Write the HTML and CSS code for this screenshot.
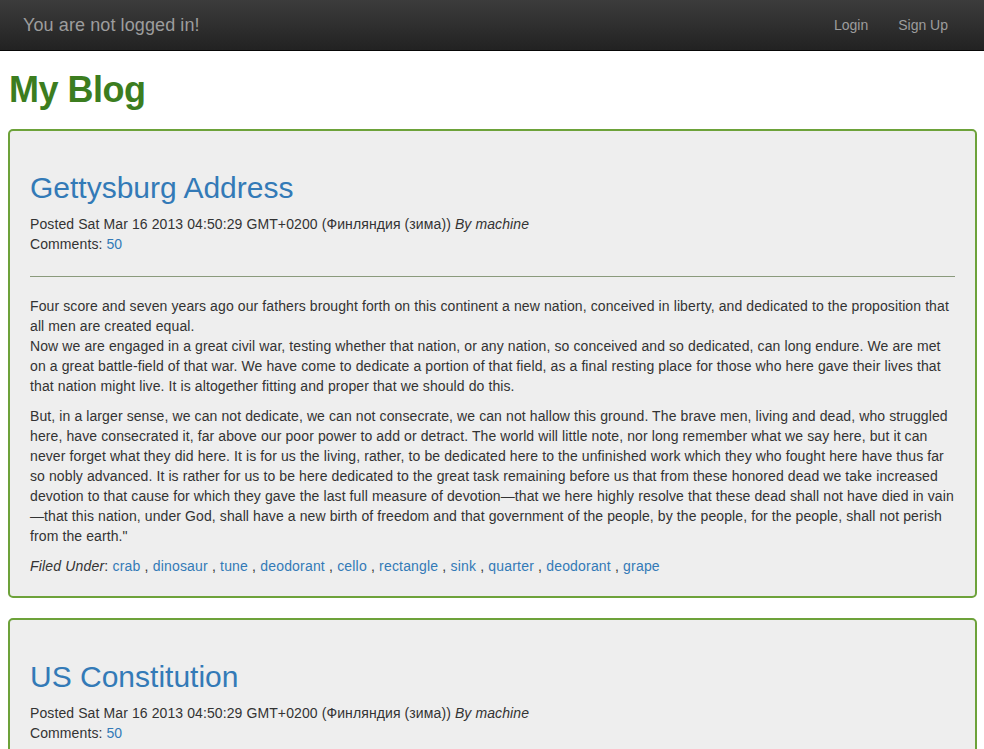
FILE: index.html
```html
<!DOCTYPE html>
<html>
<head>
<meta charset="utf-8">
<title>My Blog</title>
<link rel="stylesheet" href="styles.css">
</head>
<body>
<nav class="navbar">
  <span class="brand">You are not logged in!</span>
  <ul class="nav-links">
    <li><a href="#">Login</a></li>
    <li><a href="#">Sign Up</a></li>
  </ul>
</nav>
<main class="page">
  <h1 class="blog-title">My Blog</h1>

  <article class="post">
    <h2 class="post-title"><a href="#">Gettysburg Address</a></h2>
    <div class="meta">
      <div>Posted Sat Mar 16 2013 04:50:29 GMT+0200 (Финляндия (зима)) <em>By machine</em></div>
      <div>Comments: <a href="#">50</a></div>
    </div>
    <hr class="divider">
    <p>Four score and seven years ago our fathers brought forth on this continent a new nation, conceived in liberty, and dedicated to the proposition that all men are created equal.<br>Now we are engaged in a great civil war, testing whether that nation, or any nation, so conceived and so dedicated, can long endure. We are met on a great battle-field of that war. We have come to dedicate a portion of that field, as a final resting place for those who here gave their lives that that nation might live. It is altogether fitting and proper that we should do this.</p>
    <p>But, in a larger sense, we can not dedicate, we can not consecrate, we can not hallow this ground. The brave men, living and dead, who struggled here, have consecrated it, far above our poor power to add or detract. The world will little note, nor long remember what we say here, but it can never forget what they did here. It is for us the living, rather, to be dedicated here to the unfinished work which they who fought here have thus far so nobly advanced. It is rather for us to be here dedicated to the great task remaining before us that from these honored dead we take increased devotion to that cause for which they gave the last full measure of devotion—that we here highly resolve that these dead shall not have died in vain—that this nation, under God, shall have a new birth of freedom and that government of the people, by the people, for the people, shall not perish from the earth."</p>
    <p class="tags"><em>Filed Under</em>: <a href="#">crab</a> , <a href="#">dinosaur</a> , <a href="#">tune</a> , <a href="#">deodorant</a> , <a href="#">cello</a> , <a href="#">rectangle</a> , <a href="#">sink</a> , <a href="#">quarter</a> , <a href="#">deodorant</a> , <a href="#">grape</a></p>
  </article>

  <article class="post">
    <h2 class="post-title"><a href="#">US Constitution</a></h2>
    <div class="meta">
      <div>Posted Sat Mar 16 2013 04:50:29 GMT+0200 (Финляндия (зима)) <em>By machine</em></div>
      <div>Comments: <a href="#">50</a></div>
    </div>
    <hr class="divider">
    <p>We the People of the United States, in Order to form a more perfect Union, establish Justice, insure domestic Tranquility, provide for the common defence, promote the general Welfare, and secure the Blessings of Liberty to ourselves and our Posterity, do ordain and establish this Constitution for the United States of America.</p>
  </article>
</main>
</body>
</html>
```
FILE: styles.css
```css
* { box-sizing: border-box; }
html, body { margin: 0; padding: 0; }
body {
  font-family: "Liberation Sans", Arial, sans-serif;
  font-size: 14px;
  line-height: 20px;
  color: #333;
  background: #fff;
}
a { color: #337ab7; text-decoration: none; }

.navbar {
  height: 51px;
  display: flex;
  align-items: center;
  justify-content: space-between;
  background: linear-gradient(to bottom, #3c3c3c 0%, #222 100%);
  border-bottom: 1px solid #080808;
  padding: 0 21px 0 8px;
}
.brand {
  font-size: 18px;
  color: #9d9d9d;
  padding: 0 15px;
  line-height: 20px;
  letter-spacing: 0.1px;
}
.nav-links {
  list-style: none;
  margin: 0;
  padding: 0;
  display: flex;
}
.nav-links a {
  display: block;
  padding: 15px;
  color: #9d9d9d;
  font-size: 14px;
  line-height: 20px;
}

.page { padding: 0 7px 0 8px; }
.blog-title {
  margin: 19px 0 19px 1px;
  font-size: 36px;
  line-height: 40px;
  font-weight: bold;
  color: #3c7d1f;
  letter-spacing: -0.5px;
}
.post {
  background: #eee;
  border: 2px solid #6da23a;
  border-radius: 5px;
  padding: 20px 20px 10px;
  margin-bottom: 20px;
}
.post-title {
  margin: 20px 0 10px;
  font-size: 30px;
  line-height: 33px;
  font-weight: normal;
}
.meta,
.post p {
  letter-spacing: 0.1px;
}
.post p.tags { letter-spacing: 0.18px; }
.divider {
  border: 0;
  border-top: 1px solid #8a9a7c;
  margin: 22px 0 19px;
  height: 0;
}
.post p { margin: 0 0 10px; }
```
